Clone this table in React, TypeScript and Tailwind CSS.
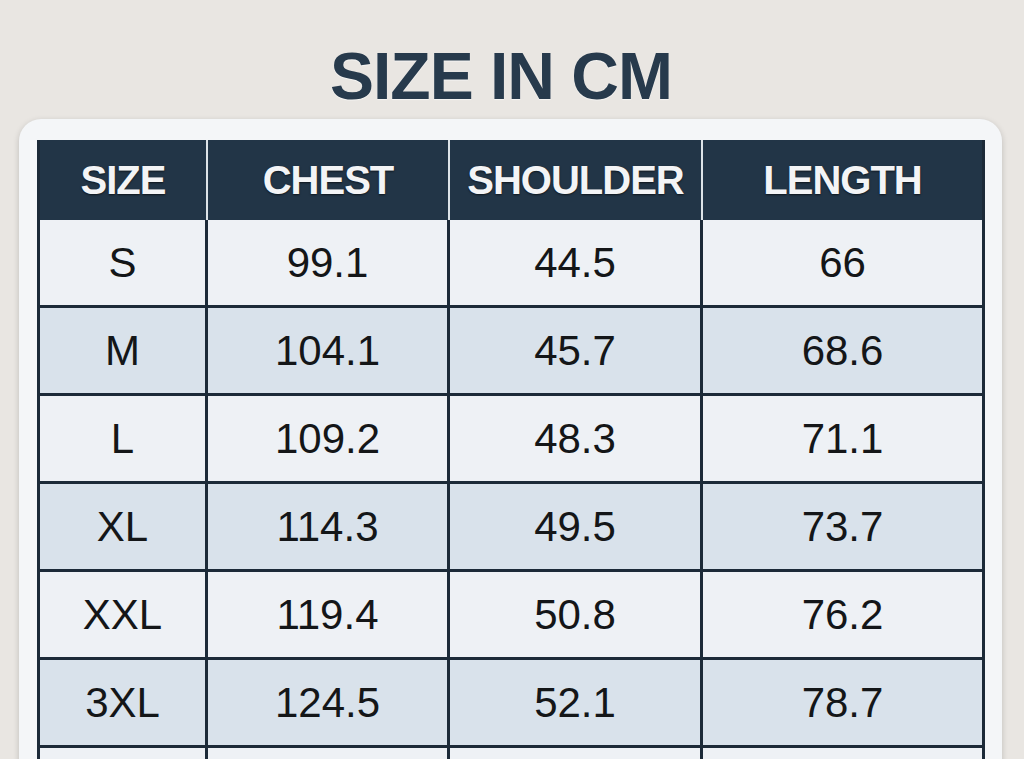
import React from "react";

const columns = [
  { label: "SIZE", width: "w-[168px]" },
  { label: "CHEST", width: "w-[242px]" },
  { label: "SHOULDER", width: "w-[253px]" },
  { label: "LENGTH", width: "w-[282px]" },
];

// last row runs off the bottom of the screen, only its top edge shows
const rows = [
  ["S", "99.1", "44.5", "66"],
  ["M", "104.1", "45.7", "68.6"],
  ["L", "109.2", "48.3", "71.1"],
  ["XL", "114.3", "49.5", "73.7"],
  ["XXL", "119.4", "50.8", "76.2"],
  ["3XL", "124.5", "52.1", "78.7"],
  ["", "", "", ""],
];

const font = "font-['Liberation_Sans',Arial,sans-serif]";

export default function App() {
  return (
    <div className={`h-[759px] w-[1024px] overflow-hidden bg-[#e9e6e2] ${font}`}>
      <h1 className="pt-[43px] pr-[22px] text-center text-[66px] font-bold leading-none tracking-[-1px] text-[#273a4c] [text-shadow:0_1px_1px_rgba(255,255,255,0.6)]">
        SIZE IN CM
      </h1>

      <div className="ml-[19px] mt-[10px] w-[983px] rounded-t-[22px] bg-[#f4f6f8] pl-[18px] pt-[21px] pb-8 shadow-[0_2px_6px_rgba(0,0,0,0.18)]">
        <div className="w-[948px] border-l-[3px] border-[#1c2a38]">
          {/* header */}
          <div className="flex h-[80px] bg-[#223547]">
            {columns.map((col, i) => (
              <div
                key={col.label}
                className={`${col.width} flex items-center justify-center text-[40px] font-bold tracking-[-1px] text-[#f3f4f6] [text-shadow:0_1px_2px_rgba(0,0,0,0.6)] ${
                  i === columns.length - 1 ? "border-r-[3px] border-[#1c2a38]" : "border-r-2 border-[#dde3e8]"
                }`}
              >
                {col.label}
              </div>
            ))}
          </div>

          {/* body */}
          {rows.map((row, r) => (
            <div
              key={r}
              className={`flex h-[88px] border-b-[3px] border-[#1c2a38] ${r % 2 === 0 ? "bg-[#eef1f5]" : "bg-[#d9e2eb]"}`}
            >
              {row.map((cell, c) => (
                <div
                  key={c}
                  className={`${columns[c].width} flex items-center justify-center border-r-[3px] border-[#1c2a38] text-[42px] text-[#141618]`}
                >
                  {cell}
                </div>
              ))}
            </div>
          ))}
        </div>
      </div>
    </div>
  );
}
